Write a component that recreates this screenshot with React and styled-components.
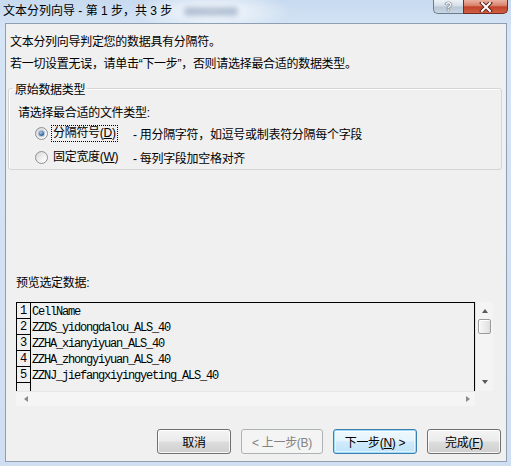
import styled, { createGlobalStyle, css } from 'styled-components'

const GlobalStyle = createGlobalStyle`
  html, body {
    margin: 0;
    padding: 0;
    background: #d3e2f3;
  }
  body {
    font-family: "Liberation Sans", "Noto Sans CJK SC", sans-serif;
    font-size: 12px;
    color: #000;
  }
`

const Window = styled.div`
  width: 511px;
  height: 466px;
  box-sizing: border-box;
  display: flex;
  flex-direction: column;
  padding: 0 4px 4px 5px;
  background:
    radial-gradient(ellipse 80px 20px at 212px 11px, rgba(255,255,255,0.9), rgba(255,255,255,0) 100%),
    linear-gradient(180deg, #c7daef 0%, #d6e5f5 30px, #cfdff1 100%);
  overflow: hidden;
`

const TitleBar = styled.div`
  height: 23px;
  display: flex;
  align-items: flex-start;
  margin-left: -2px;
  margin-right: -1px;
`

const Title = styled.div`
  line-height: 23px;
  font-size: 12px;
  white-space: nowrap;
`

const Blur = styled.div`
  width: 54px;
  height: 9px;
  margin: 7px 0 0 12px;
  background: #8ea2bd;
  border-radius: 4px;
  filter: blur(2.5px);
  opacity: 0.6;
`

const Caption = styled.div`
  margin-left: auto;
  display: flex;
`

const CapButton = styled.div`
  height: 14px;
  box-sizing: border-box;
  display: flex;
  align-items: center;
  justify-content: center;
  ${p => p.$kind === 'help' ? css`
    width: 30px;
    border: 1px solid #6c7c90;
    border-top: none;
    border-right: none;
    border-radius: 0 0 0 5px;
    background: linear-gradient(180deg, #eef2f7 0%, #d3dce7 48%, #b9c6d5 52%, #c9d5e2 100%);
    color: #f5f7fa;
    font-weight: bold;
    font-size: 12px;
    text-shadow: 0 0 1px #2e3b4c, 0 0 1px #2e3b4c;
  ` : css`
    width: 45px;
    border: 1px solid #6e2c25;
    border-top: none;
    border-radius: 0 0 5px 0;
    background: linear-gradient(180deg, #eab2a2 0%, #d88069 45%, #c2432b 52%, #d25e43 100%);
  `}
`

const Panel = styled.div`
  flex: 1;
  display: flex;
  flex-direction: column;
  background: #f0f0f0;
  border: 1px solid #8e9fb4;
  padding: 7px 0 7px 0;
`

const Line = styled.div`
  line-height: 22px;
  padding-left: 4px;
  letter-spacing: -0.3px;
  white-space: nowrap;
`

const Group = styled.fieldset`
  margin: 3px 4px 0 2px;
  padding: 0 0 1px 0;
  border: 1px solid #d5d5d5;
  border-radius: 3px;
  box-shadow: inset 1px 1px 0 #fff;
`

const Legend = styled.legend`
  margin-left: 4px;
  padding: 4px 2px 0;
  line-height: 16px;
  letter-spacing: -0.3px;
`

const Prompt = styled.div`
  margin-top: 6px;
  padding-left: 9px;
  line-height: 18px;
  letter-spacing: -0.3px;
`

const Options = styled.div`
  display: flex;
  flex-direction: column;
  gap: 2px;
`

const Option = styled.div`
  height: 22px;
  display: flex;
  align-items: center;
  padding-left: 26px;
  letter-spacing: -0.3px;
  white-space: nowrap;
`

const Radio = styled.span`
  width: 13px;
  height: 13px;
  box-sizing: border-box;
  border-radius: 50%;
  border: 1px solid #8f8f8f;
  background: linear-gradient(135deg, #d6d6d6 0%, #f7f7f7 70%, #ffffff 100%);
  display: flex;
  align-items: center;
  justify-content: center;
  margin-right: 3px;
  &::after {
    content: "";
    width: 5px;
    height: 5px;
    border-radius: 50%;
    display: ${p => (p.$checked ? 'block' : 'none')};
    background: radial-gradient(circle at 40% 35%, #b9d6f2 0%, #4d79a8 45%, #1c3a61 100%);
    box-shadow: 0 0 1px 1px rgba(120, 160, 205, 0.6);
  }
`

const OptLabel = styled.span`
  width: 82px;
  display: flex;
`

const Focus = styled.span`
  padding: 0 1px;
  line-height: 15px;
  border: 1px dotted ${p => (p.$focused ? '#000' : 'transparent')};
`

const PreviewLabel = styled.div`
  margin-top: 104px;
  padding-left: 10px;
  line-height: 18px;
  letter-spacing: -0.3px;
`

const Preview = styled.div`
  margin: 10px 0 0 10px;
  width: 477px;
  display: grid;
  grid-template-columns: 1fr 18px;
  grid-template-rows: 89px 15px;
`

const Table = styled.div`
  border: 1px solid #000;
  border-bottom: none;
  overflow: hidden;
  display: flex;
  flex-direction: column;
`

const Row = styled.div`
  height: 16px;
  flex: none;
  display: flex;
  align-items: stretch;
  font-family: "Liberation Mono", "Noto Sans CJK SC", monospace;
  font-size: 12px;
`

const Num = styled.div`
  width: 14px;
  flex: none;
  box-sizing: border-box;
  border-right: 1px solid #000;
  border-bottom: 1px solid #000;
  display: flex;
  align-items: flex-end;
  justify-content: center;
  line-height: 13px;
  font-size: 12px;
  letter-spacing: 0;
`

const Cell = styled.div`
  display: flex;
  align-items: flex-end;
  line-height: 13px;
  padding-left: 1px;
  letter-spacing: -1.2px;
  white-space: nowrap;
`

const VScroll = styled.div`
  background: #f4f4f4;
  border-left: 1px solid #e4e4e4;
  display: flex;
  flex-direction: column;
  align-items: center;
  padding-top: 7px;
`

const Arrow = styled.span`
  width: 0;
  height: 0;
  border: 3px solid transparent;
  ${p => p.$dir === 'up' && css`border-bottom: 4px solid #5a5a5a; border-top: none;`}
  ${p => p.$dir === 'down' && css`border-top: 4px solid #5a5a5a; border-bottom: none; margin-top: auto; margin-bottom: 7px;`}
  ${p => p.$dir === 'left' && css`border-right: 4px solid #8a8a8a; border-left: none;`}
  ${p => p.$dir === 'right' && css`border-left: 4px solid #8a8a8a; border-right: none; margin-left: auto;`}
`

const Thumb = styled.div`
  margin-top: 6px;
  width: 13px;
  height: 15px;
  box-sizing: border-box;
  border: 1px solid #9b9b9b;
  border-radius: 2px;
  background: linear-gradient(90deg, #f7f7f7 0%, #ececec 50%, #dedede 100%);
  box-shadow: inset 1px 1px 0 #fff;
`

const HScroll = styled.div`
  background: #f5f5f5;
  border-top: 1px solid #e6e6e6;
  display: flex;
  align-items: center;
  padding: 0 5px 0 8px;
`

const Buttons = styled.div`
  margin-top: 23px;
  display: flex;
  justify-content: flex-end;
  gap: 10px;
  padding-right: 5px;
`

const Button = styled.button`
  width: ${p => p.$w}px;
  height: 25px;
  box-sizing: border-box;
  font-family: inherit;
  font-size: 12px;
  letter-spacing: -0.3px;
  padding: 0;
  border-radius: 3px;
  border: 1px solid #707070;
  color: #000;
  background: linear-gradient(180deg, #f4f4f4 0%, #ebebeb 48%, #dddddd 52%, #cfcfcf 100%);
  box-shadow: inset 0 0 0 1px rgba(255,255,255,0.8);
  ${p => p.disabled && css`
    border-color: #adb2b5;
    color: #838383;
    background: #f4f4f4;
    box-shadow: none;
  `}
  ${p => p.$default && css`
    border-color: #3c7fb1;
    background: linear-gradient(180deg, #f0f8fd 0%, #e4f3fc 48%, #d0ebfb 52%, #bfe3f8 100%);
    box-shadow: inset 0 0 0 1px #9fdaf6, inset 0 0 0 2px rgba(255,255,255,0.5);
  `}
`

const rows = [
  'CellName',
  'ZZDS_yidongdalou_ALS_40',
  'ZZHA_xianyiyuan_ALS_40',
  'ZZHA_zhongyiyuan_ALS_40',
  'ZZNJ_jiefangxiyingyeting_ALS_40',
  '',
]

function CloseGlyph() {
  return (
    <svg width="14" height="10" viewBox="0 0 14 10">
      <path d="M3 1 L11 9 M11 1 L3 9" stroke="#5b231b" strokeWidth="4" strokeLinecap="square" />
      <path d="M3 1 L11 9 M11 1 L3 9" stroke="#fff" strokeWidth="2" strokeLinecap="square" />
    </svg>
  )
}

export default function App() {
  return (
    <>
      <GlobalStyle />
      <Window>
        <TitleBar>
          <Title>文本分列向导 - 第 1 步，共 3 步</Title>
          <Blur />
          <Caption>
            <CapButton $kind="help">?</CapButton>
            <CapButton $kind="close"><CloseGlyph /></CapButton>
          </Caption>
        </TitleBar>
        <Panel>
          <Line>文本分列向导判定您的数据具有分隔符。</Line>
          <Line>若一切设置无误，请单击“下一步”，否则请选择最合适的数据类型。</Line>
          <Group>
            <Legend>原始数据类型</Legend>
            <Prompt>请选择最合适的文件类型:</Prompt>
            <Options>
              <Option>
                <Radio $checked />
                <OptLabel><Focus $focused>分隔符号(<u>D</u>)</Focus></OptLabel>
                <span>- 用分隔字符，如逗号或制表符分隔每个字段</span>
              </Option>
              <Option>
                <Radio />
                <OptLabel><Focus>固定宽度(<u>W</u>)</Focus></OptLabel>
                <span>- 每列字段加空格对齐</span>
              </Option>
            </Options>
          </Group>
          <PreviewLabel>预览选定数据:</PreviewLabel>
          <Preview>
            <Table>
              {rows.map((r, i) => (
                <Row key={i}>
                  <Num>{i + 1 <= 5 ? i + 1 : ''}</Num>
                  <Cell>{r}</Cell>
                </Row>
              ))}
            </Table>
            <VScroll>
              <Arrow $dir="up" />
              <Thumb />
              <Arrow $dir="down" />
            </VScroll>
            <HScroll>
              <Arrow $dir="left" />
              <Arrow $dir="right" />
            </HScroll>
            <div />
          </Preview>
          <Buttons>
            <Button $w={74}>取消</Button>
            <Button $w={82} disabled>&lt; 上一步(B)</Button>
            <Button $w={84} $default>下一步(<u>N</u>) &gt;</Button>
            <Button $w={74}>完成(<u>F</u>)</Button>
          </Buttons>
        </Panel>
      </Window>
    </>
  )
}
